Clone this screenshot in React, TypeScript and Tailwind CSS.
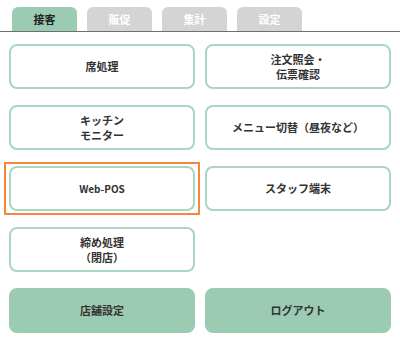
import React from "react";

const font = { fontFamily: '"Noto Sans CJK JP", "Noto Sans", sans-serif' };

function Btn({ children, filled = false }: { children: React.ReactNode; filled?: boolean }) {
  return (
    <div
      className={
        "h-[45px] rounded-[8px] flex items-center justify-center text-center text-[11px] leading-[15px] font-bold text-[#333] " +
        (filled ? "bg-[#9ccbb4] border-2 border-[#9ccbb4]" : "bg-white border-2 border-[#a9d6c0]")
      }
    >
      <div>{children}</div>
    </div>
  );
}

export default function App() {
  const tabs = ["接客", "販促", "集計", "設定"];
  return (
    <div className="w-[400px] h-[344px] bg-white overflow-hidden" style={font}>
      <div className="flex gap-[10px] pl-[12px] pt-[7px] border-b border-[#6f6f6f]">
        {tabs.map((t, i) => (
          <div
            key={t}
            className={
              "w-[65px] h-[24px] rounded-t-[6px] flex items-center justify-center text-[11px] font-bold " +
              (i === 0 ? "bg-[#9ccbb4] text-[#222]" : "bg-[#d4d4d4] text-white")
            }
          >
            {t}
          </div>
        ))}
      </div>
      <div className="grid grid-cols-2 gap-x-[10px] gap-y-[16px] px-[9px] mt-[12px]">
        <Btn>席処理</Btn>
        <Btn>
          注文照会・
          <br />
          伝票確認
        </Btn>
        <Btn>
          キッチン
          <br />
          モニター
        </Btn>
        <Btn>メニュー切替（昼夜など）</Btn>
        <div className="relative">
          <Btn>
            <span className="text-[10px]">Web-POS</span>
          </Btn>
          <div className="absolute -left-[5px] -right-[5px] -top-[4px] -bottom-[4px] border-[2.5px] border-[#f5883a] pointer-events-none" />
        </div>
        <Btn>スタッフ端末</Btn>
        <Btn>
          締め処理
          <br />
          （閉店）
        </Btn>
        <div />
        <Btn filled>店舗設定</Btn>
        <Btn filled>ログアウト</Btn>
      </div>
    </div>
  );
}
